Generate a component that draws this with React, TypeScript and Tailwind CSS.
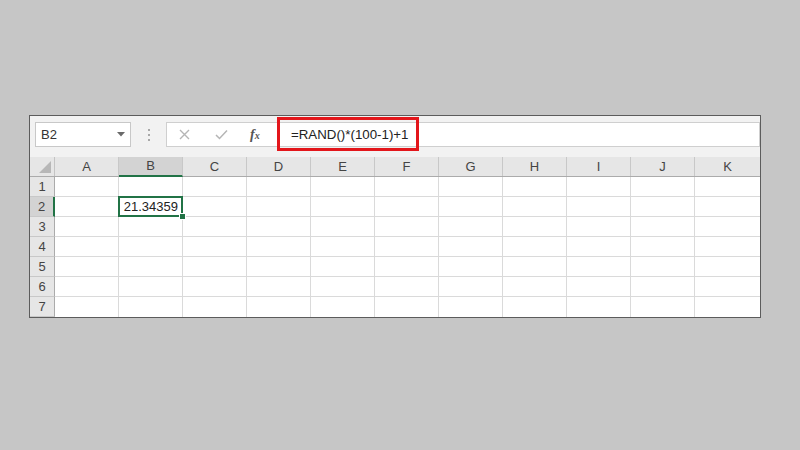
import React from "react";

const cols = ["A", "B", "C", "D", "E", "F", "G", "H", "I", "J", "K"];
const rows = [1, 2, 3, 4, 5, 6, 7];

export default function App() {
  return (
    <div
      className="w-[800px] h-[450px] bg-[#c6c6c6] pt-[115px] pl-[29px] relative"
      style={{ fontFamily: '"Liberation Sans", Arial, sans-serif' }}
    >
      <div className="w-[732px] border border-[#5c5c5c] bg-white">
        {/* toolbar */}
        <div className="h-[41px] bg-[#f2f2f2] flex items-start pt-[6px] pl-[5px]">
          <div className="w-[96px] h-[25px] bg-white border border-[#c8c8c8] flex items-center justify-between pl-[5px] pr-[5px]">
            <span className="text-[13px] text-[#333]">B2</span>
            <svg width="8" height="5" viewBox="0 0 8 5">
              <path d="M0 0 L8 0 L4 4.5 Z" fill="#6a6a6a" />
            </svg>
          </div>
          <div className="w-[35px] h-[25px] flex flex-col items-center justify-center gap-[3px]">
            <div className="w-[2px] h-[2px] bg-[#a8a8a8]" />
            <div className="w-[2px] h-[2px] bg-[#a8a8a8]" />
            <div className="w-[2px] h-[2px] bg-[#a8a8a8]" />
          </div>
          <div className="flex-1 h-[25px] bg-white border border-[#cfcfcf] flex items-center">
            <div className="w-[106px] flex items-center h-full">
              <svg className="ml-[12px]" width="11" height="11" viewBox="0 0 11 11">
                <path d="M1 1 L10 10 M10 1 L1 10" stroke="#b5b5b5" strokeWidth="1.4" />
              </svg>
              <svg className="ml-[25px]" width="13" height="11" viewBox="0 0 13 11">
                <path d="M1 6 L4.5 9.5 L12 1.5" stroke="#b5b5b5" strokeWidth="1.5" fill="none" />
              </svg>
              <span
                className="ml-[22px] text-[14px] italic font-bold text-[#555]"
                style={{ fontFamily: '"Liberation Serif", "Times New Roman", serif' }}
              >
                f<span className="text-[10px]">x</span>
              </span>
            </div>
            <span className="ml-[18px] text-[13.3px] text-[#222]">=RAND()*(100-1)+1</span>
          </div>
        </div>

        {/* header row */}
        <div className="flex h-[20px] bg-[#e6e6e6] border-b border-[#ababab]">
          <div className="w-[25px] shrink-0 border-r border-[#c4c4c4] relative">
            <svg className="absolute right-[3px] bottom-[3px]" width="12" height="12" viewBox="0 0 12 12">
              <path d="M12 0 L12 12 L0 12 Z" fill="#b7b7b7" />
            </svg>
          </div>
          {cols.map((c, i) => (
            <div
              key={c}
              className={
                "shrink-0 flex items-center justify-center text-[13px] text-[#444] " +
                (i === 10 ? "flex-1 " : "w-[64px] border-r border-[#c8c8c8] ") +
                (c === "B" ? "bg-[#d3d3d3] border-b-2 border-b-[#217346] -mb-[1px]" : "")
              }
            >
              {c}
            </div>
          ))}
        </div>

        {/* body rows */}
        {rows.map((r) => (
          <div key={r} className="flex h-[20px]">
            <div
              className={
                "w-[25px] shrink-0 flex items-center justify-center text-[13px] text-[#444] border-b border-[#c8c8c8] " +
                (r === 2
                  ? "bg-[#d3d3d3] border-r-2 border-r-[#217346]"
                  : "bg-[#e6e6e6] border-r border-r-[#ababab]")
              }
            >
              {r}
            </div>
            {cols.map((c, i) => {
              const sel = r === 2 && c === "B";
              return (
                <div
                  key={c}
                  className={
                    "shrink-0 border-b border-[#dadada] relative " +
                    (i === 10 ? "flex-1 " : "w-[64px] border-r ") +
                    (r === 7 ? "border-b-0 " : "") +
                    (sel ? "z-10" : "")
                  }
                >
                  {sel && (
                    <>
                      <div className="absolute -left-[1px] -top-[1px] w-[65px] h-[21px] border-2 border-[#217346] flex items-center justify-end pr-[3px] text-[13px] text-[#222]">
                        21.34359
                      </div>
                      <div className="absolute -right-[4px] -bottom-[4px] w-[7px] h-[7px] bg-[#217346] border border-white" />
                    </>
                  )}
                </div>
              );
            })}
          </div>
        ))}
      </div>

      {/* red annotation box */}
      <div className="absolute left-[277px] top-[117px] w-[142px] h-[34px] border-[3px] border-[#e3161b]" />
    </div>
  );
}
